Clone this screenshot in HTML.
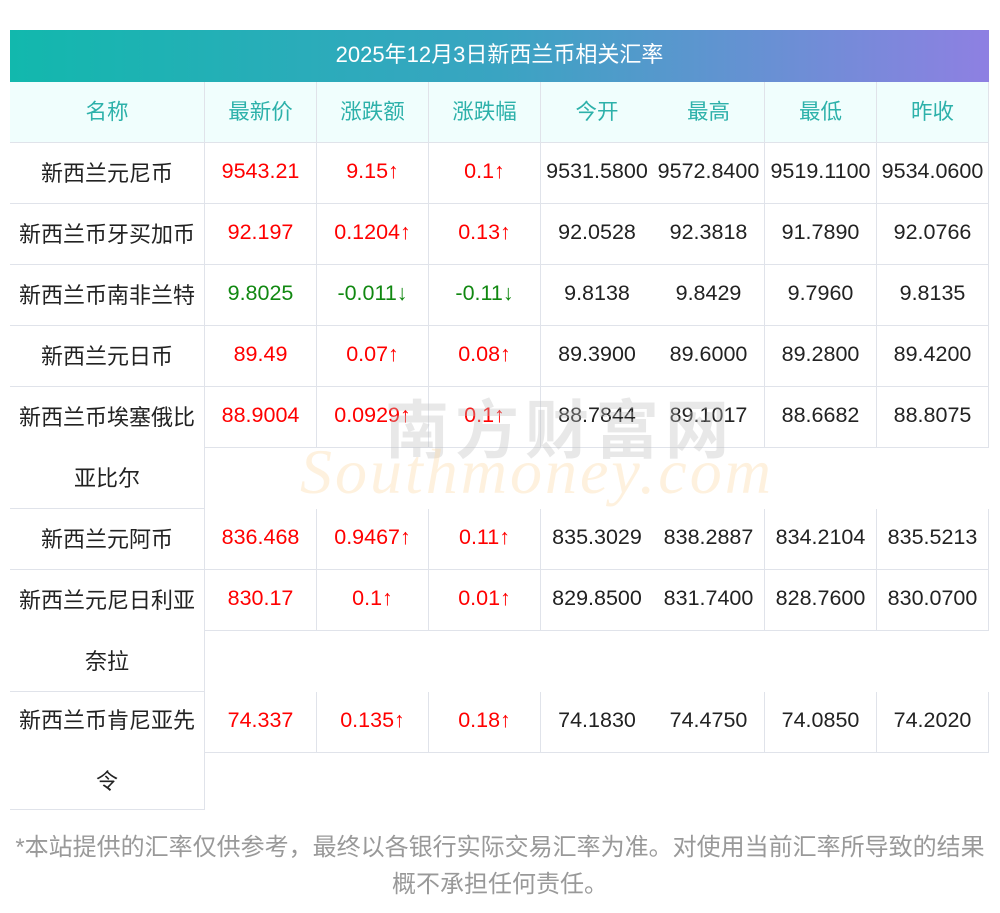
<!DOCTYPE html>
<html><head><meta charset="utf-8"><style>
body{margin:0;width:1000px;height:913px;background:#fff;font-family:"Liberation Sans","Noto Sans CJK SC",sans-serif;position:relative;overflow:hidden}
.t{position:absolute;left:10px;top:30px;width:979px;height:52px;background:linear-gradient(90deg,#12b8ad,#3aa4c2 50%,#8e80e2);color:#fff;font-size:22px;line-height:50px;text-align:center}
.c{position:absolute;box-sizing:border-box;text-align:center;font-size:21.5px;border-bottom:1px solid #e0e3ea;border-right:1px solid #e0e3ea;display:flex;align-items:center;justify-content:center;color:#222;padding-bottom:3px}
.nm{font-size:22px}
.h{background:#f0fefd;color:#2db1aa}
.r{color:#f00}.g{color:#118811}
.n{flex-direction:column;line-height:61px;padding-bottom:0}
.f{position:absolute;left:0;width:1000px;text-align:center;color:#999;font-size:24px}
.wm{position:absolute;left:385px;top:380px;font-size:64px;color:rgba(190,190,190,.35);letter-spacing:6px;font-weight:bold}
.wm2{position:absolute;left:300px;top:435px;font-size:64px;color:rgba(253,215,160,.35);font-family:"Liberation Serif",serif;font-style:italic;letter-spacing:3px}
</style></head><body>
<div class="t">2025年12月3日新西兰币相关汇率</div>
<div id="g"></div>
<div class="wm">南方财富网</div>
<div class="wm2">Southmoney.com</div>
<div class="f" style="top:827px">*本站提供的汇率仅供参考，最终以各银行实际交易汇率为准。对使用当前汇率所导致的结果</div>
<div class="f" style="top:864px">概不承担任何责任。</div>
<script>
var X=[10,205,317,429,541,653,765,877,989];
var rows=[
["h",["名称","最新价","涨跌额","涨跌幅","今开","最高","最低","昨收"],82,61,0],
["r",["新西兰元尼币","9543.21","9.15↑","0.1↑","9531.5800","9572.8400","9519.1100","9534.0600"],143,61,0],
["r",["新西兰币牙买加币","92.197","0.1204↑","0.13↑","92.0528","92.3818","91.7890","92.0766"],204,61,0],
["g",["新西兰币南非兰特","9.8025","-0.011↓","-0.11↓","9.8138","9.8429","9.7960","9.8135"],265,61,0],
["r",["新西兰元日币","89.49","0.07↑","0.08↑","89.3900","89.6000","89.2800","89.4200"],326,61,0],
["r",["新西兰币埃塞俄比<br>亚比尔","88.9004","0.0929↑","0.1↑","88.7844","89.1017","88.6682","88.8075"],387,61,1],
["r",["新西兰元阿币","836.468","0.9467↑","0.11↑","835.3029","838.2887","834.2104","835.5213"],509,61,0],
["r",["新西兰元尼日利亚<br>奈拉","830.17","0.1↑","0.01↑","829.8500","831.7400","828.7600","830.0700"],570,61,1],
["r",["新西兰币肯尼亚先<br>令","74.337","0.135↑","0.18↑","74.1830","74.4750","74.0850","74.2020"],692,61,1]];
var h="";
rows.forEach(function(r){
 var cls=r[0],v=r[1],y=r[2],ht=r[3],two=r[4];
 for(var i=0;i<8;i++){
  var w=X[i+1]-X[i],hh=(i==0&&two)?ht*2:ht,c="c";
  if(cls=="h")c+=" h";else if(i>0&&i<4)c+=" "+cls;
  if(i==0&&cls!="h")c+=" nm";
  if(i==0&&two)c+=" n";
  var br=(i==4)?"border-right:none;":"";
  h+='<div class="'+c+'" style="left:'+X[i]+'px;top:'+y+'px;width:'+w+'px;height:'+hh+'px;'+br+(i==0&&two&&y==692?'height:118px;':'')+'">'+(i==0&&two?'<div>'+v[0].replace('<br>','</div><div>')+'</div>':v[i])+'</div>';
 }
});
document.getElementById("g").innerHTML=h;
</script>
</body></html>
